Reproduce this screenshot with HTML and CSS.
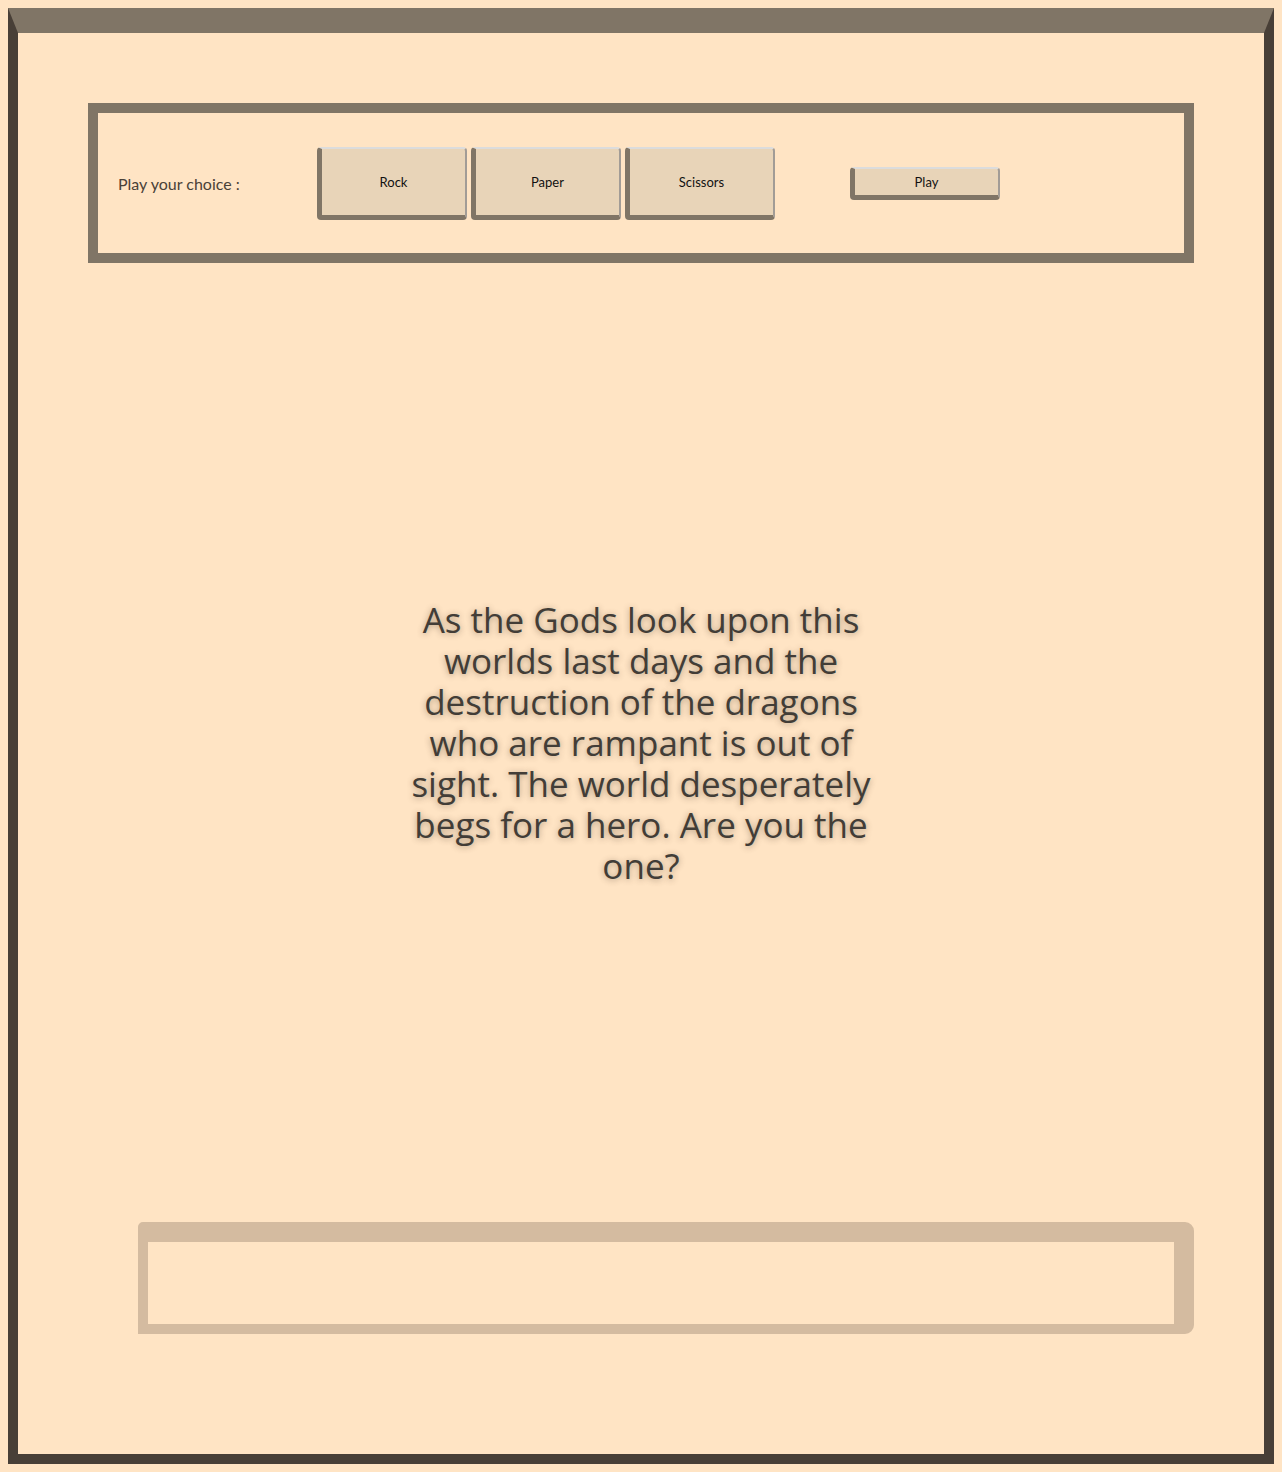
FILE: index.html
```html
<!DOCTYPE html>
<html lang="en">
<head>
<meta charset="utf-8">
<title>Rock Paper Scissors</title>
<link rel="stylesheet" href="styles.css">
</head>
<body>
  <div class="frame">
    <div class="controls">
      <span class="prompt">Play your choice :</span>
      <div class="choices">
        <button class="btn choice">Rock</button>
        <button class="btn choice">Paper</button>
        <button class="btn choice">Scissors</button>
      </div>
      <button class="btn play">Play</button>
    </div>
    <div class="story">
      <p class="story-text">As the Gods look upon this worlds last days and the destruction of the dragons who are rampant is out of sight. The world desperately begs for a hero. Are you the one?</p>
    </div>
    <div class="result"></div>
  </div>
</body>
</html>
```
FILE: styles.css
```css
html, body {
  margin: 0;
  padding: 0;
}
body {
  background: #ffe4c4;
  padding: 8px;
  font-family: Lato, "Open Sans", sans-serif;
  color: #4a4138;
}
.frame {
  box-sizing: border-box;
  height: 1456px;
  border-style: solid;
  border-width: 25px 10px 10px 10px;
  border-color: #807566 #483f37 #483f37 #483f37;
  display: flex;
  flex-direction: column;
}
.controls {
  box-sizing: border-box;
  height: 160px;
  margin: 70px 70px 0 70px;
  border: 10px solid #807566;
  padding: 0 20px;
  display: flex;
  align-items: center;
}
.prompt {
  width: 199px;
  font-size: 16px;
  color: #4a4138;
}
.choices {
  display: flex;
  gap: 4px;
}
.btn {
  box-sizing: border-box;
  width: 150px;
  background: #e8d4b8;
  border-style: solid;
  border-width: 2px 2px 5px 5px;
  border-color: #dcdcdc #a29c96 #807566 #807566;
  border-radius: 4px;
  font-family: Lato, "Open Sans", sans-serif;
  font-size: 13px;
  color: #111;
  padding: 0;
  cursor: pointer;
}
.choice {
  height: 73px;
}
.play {
  height: 33px;
  margin-left: 75px;
}
.story {
  flex: 1;
  display: flex;
  align-items: center;
  justify-content: center;
}
.story-text {
  margin: 0;
  width: 474px;
  text-align: center;
  font-family: "Open Sans", Lato, sans-serif;
  font-size: 35px;
  line-height: 41px;
  color: #423d37;
  text-shadow: 0 1px 6px rgba(70, 55, 40, 0.45);
}
.result {
  box-sizing: border-box;
  height: 112px;
  margin: 0 70px 120px 120px;
  border-style: solid;
  border-width: 20px 20px 10px 10px;
  border-color: #d4bba0;
  border-radius: 5px 9px 9px 0;
}
```
